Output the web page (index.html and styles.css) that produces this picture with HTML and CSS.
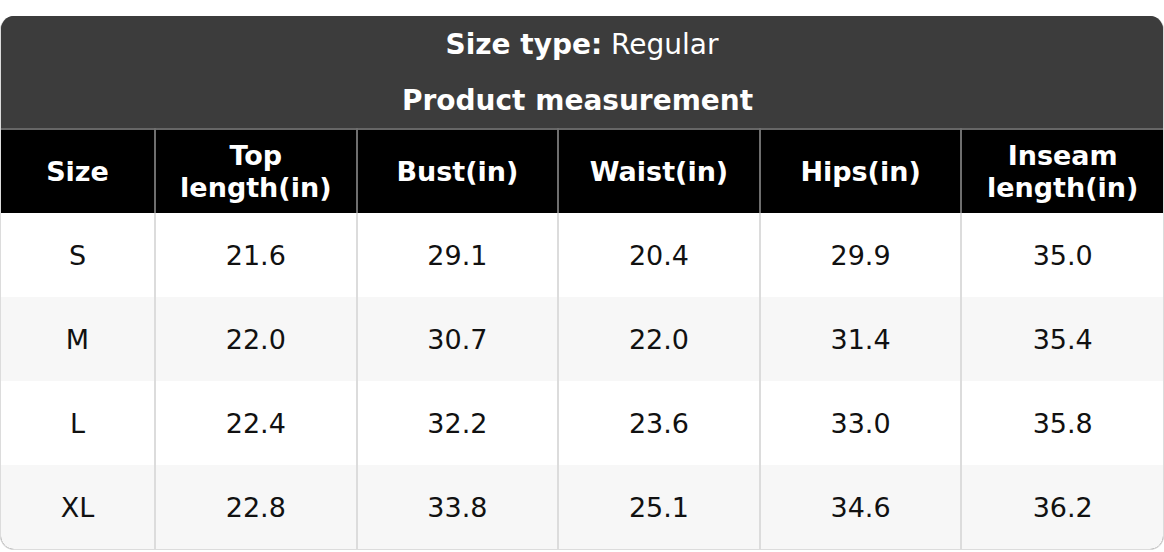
FILE: index.html
```html
<!DOCTYPE html>
<html>
<head>
<meta charset="utf-8">
<link rel="stylesheet" href="styles.css">
</head>
<body>
<div class="card">
  <div class="caption"><span><b>Size type:</b> Regular</span></div>
  <div class="caption"><span><b>Product measurement</b>&nbsp;</span></div>
  <table class="sizes">
    <colgroup>
      <col class="c-size"><col class="c-data"><col class="c-data"><col class="c-data"><col class="c-data"><col class="c-data">
    </colgroup>
    <thead>
      <tr>
        <th>Size</th>
        <th>Top<br>length(in)</th>
        <th>Bust(in)</th>
        <th>Waist(in)</th>
        <th>Hips(in)</th>
        <th>Inseam<br>length(in)</th>
      </tr>
    </thead>
    <tbody>
      <tr><td>S</td><td>21.6</td><td>29.1</td><td>20.4</td><td>29.9</td><td>35.0</td></tr>
      <tr><td>M</td><td>22.0</td><td>30.7</td><td>22.0</td><td>31.4</td><td>35.4</td></tr>
      <tr><td>L</td><td>22.4</td><td>32.2</td><td>23.6</td><td>33.0</td><td>35.8</td></tr>
      <tr><td>XL</td><td>22.8</td><td>33.8</td><td>25.1</td><td>34.6</td><td>36.2</td></tr>
    </tbody>
  </table>
</div>
</body>
</html>
```
FILE: styles.css
```css
html, body {
  margin: 0;
  padding: 0;
  background: #ffffff;
}
body {
  padding-top: 16px;
  font-family: "DejaVu Sans", "Liberation Sans", sans-serif;
  font-size: 27px;
  color: #111;
}
.card {
  border-radius: 14px;
  overflow: hidden;
  border: 1px solid #dcdcdc;
  border-top: none;
  background: #3c3c3c;
}
.caption {
  height: 56px;
  display: flex;
  align-items: center;
  justify-content: center;
  color: #fff;
  font-size: 28px;
  background: #3c3c3c;
}
.sizes {
  width: 100%;
  border-collapse: collapse;
  table-layout: fixed;
  border-top: 2px solid #666;
}
.c-size { width: 154px; }
.sizes th {
  background: #000;
  color: #fff;
  font-weight: bold;
  height: 83px;
  line-height: 32px;
  padding: 0;
  border-left: 2px solid #6e6e6e;
  vertical-align: middle;
}
.sizes td {
  height: 84px;
  padding: 0;
  text-align: center;
  border-left: 2px solid #dcdcdc;
  background: #fff;
}
.sizes th:first-child, .sizes td:first-child { border-left: none; }
.sizes tbody tr:nth-child(even) td { background: #f7f7f7; }
```
